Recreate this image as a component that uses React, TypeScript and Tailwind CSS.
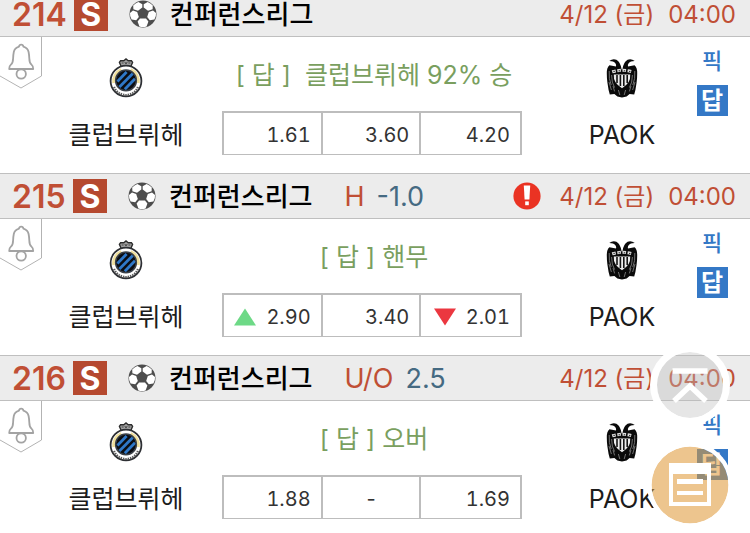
import type { ReactNode } from "react";

type Trend = "up" | "down";

type Odd = {
  value: string;
  trend?: Trend;
};

type Match = {
  no: number;
  market?: string;
  line?: string;
  alert?: boolean;
  answer: string;
  odds: Odd[];
};

const MATCHES: Match[] = [
  {
    no: 214,
    answer: "[ 답 ]\u00a0 클럽브뤼헤 92% 승",
    odds: [{ value: "1.61" }, { value: "3.60" }, { value: "4.20" }],
  },
  {
    no: 215,
    market: "H",
    line: "-1.0",
    alert: true,
    answer: "[ 답 ] 핸무",
    odds: [
      { value: "2.90", trend: "up" },
      { value: "3.40" },
      { value: "2.01", trend: "down" },
    ],
  },
  {
    no: 216,
    market: "U/O",
    line: "2.5",
    answer: "[ 답 ] 오버",
    odds: [{ value: "1.88" }, { value: "-" }, { value: "1.69" }],
  },
];

function BallIcon() {
  return (
    <svg viewBox="0 0 28 28" className="size-7 shrink-0" aria-hidden="true">
      <circle cx="14" cy="14" r="13.5" fill="#4d4d4d" />
      <g fill="#fff">
        <path d="M9.4 2 13.3 4.2v3.4L9 10.8 4.4 9.2 4.2 5.6Q6.4 3 9.4 2Z" />
        <path d="M18.6 2 14.7 4.2v3.4L19 10.8l4.6-1.6.2-3.6Q21.6 3 18.6 2Z" />
        <path d="M4 10.6 8.2 12l1.6 5-2.6 3.2-4.6-.6Q.6 16.4 1 13Z" />
        <path d="M24 10.6 19.8 12l-1.6 5 2.6 3.2 4.6-.6q2-3.2 1.6-6.6Z" />
        <path d="M11 18.4h6l2.4 3.2-1.8 4.8q-3.6 1.2-7.2 0L8.6 21.6Z" />
      </g>
    </svg>
  );
}

function AlertIcon() {
  return (
    <svg viewBox="0 0 28 28" className="size-7 shrink-0" aria-hidden="true">
      <circle cx="14" cy="14" r="13.6" fill="#ea3323" />
      <path d="M10.8 3.6h6.4l-.8 14h-4.8Z" fill="#fff" />
      <rect x="12.2" y="19.4" width="3.6" height="3.8" fill="#fff" />
    </svg>
  );
}

function BellTag() {
  return (
    <svg viewBox="0 0 42 54" className="h-[54px] w-[42px]" aria-hidden="true">
      <path d="M41.5 0v39L21 51 0 39" fill="#fff" stroke="#b3b3b3" />
      <g fill="none" stroke="#a3a3a3" strokeWidth="1.8" strokeLinejoin="round">
        <path d="M19 9.6q.3-1.9 2.2-1.9t2.2 1.9q4.4 1.2 5.2 5.4.6 3 .7 6.4.1 4.6 2.2 6.2 1.9 1.6 1.7 4.4H9.2q-.2-2.8 1.7-4.4 2.1-1.6 2.2-6.2.1-3.4.7-6.4.8-4.2 5.2-5.4Z" />
        <circle cx="21.2" cy="37" r="4.7" fill="#fff" />
      </g>
    </svg>
  );
}

function BruggeCrest() {
  return (
    <svg viewBox="0 0 34 40" className="h-10 w-[34px]" aria-hidden="true">
      <path
        d="M12.4 9 10.4 4.4 11.6 2.6l3.2.2L17 1l2.2 1.8 3.2-.2 1.2 1.8L21.6 9Z"
        fill="#a3a3a3"
        stroke="#2c2c2c"
        strokeWidth="1.4"
      />
      <path d="M12.6 5h2M19.4 5h2M15.8 4l1.2 2 1.2-2" stroke="#444" fill="none" />
      <circle cx="17" cy="23" r="15.4" fill="#fff" stroke="#2d2f33" strokeWidth="1.8" />
      <path d="M4.8 25A12.6 12.6 0 0 1 12.4 11.6" fill="none" stroke="#efdf9c" strokeWidth="3" />
      <path d="M29.2 25A12.6 12.6 0 0 0 21.6 11.6" fill="none" stroke="#efdf9c" strokeWidth="3" />
      <path
        d="M5 29A13 13 0 0 0 29 29"
        fill="none"
        stroke="#5a5a5a"
        strokeWidth="2.2"
        strokeDasharray="1.5 .9"
      />
      <circle cx="17" cy="22.4" r="10.4" fill="#0b0d12" />
      <g stroke="#2f78c8" strokeWidth="2.8">
        <path d="M8.4 23.4 17.6 14" />
        <path d="M10.4 29 23.8 15.4" />
        <path d="M15.8 31.2 26 20.8" />
      </g>
      <circle cx="17" cy="22.4" r="10.4" fill="none" stroke="#3a4048" strokeWidth="1.4" />
    </svg>
  );
}

function PaokCrest() {
  return (
    <svg viewBox="0 0 32 40" className="h-10 w-8" aria-hidden="true">
      <path
        d="M15.6 11.4Q14.6 4.2 10.4 1.8 7 .2 3.2 3q4.6 0 6 2 1.4 1.8.8 3.6L3.4 7.2Q.6 9.6.8 15.4q0 5 .6 9L2.6 32l1.2 4.4 4.6-.4 3 2.6 4.6 1 4.6-1 3-2.6 4.600.4L29.400 32l1.200-7.600q.6-4 .6-9 .2-5.800-2.600-8.200L22 8.600q-.6-1.800.8-3.600 1.400-2 6-2-3.800-2.800-7.200-1.200-4.200 2.400-5.200 9.600Z"
        fill="#0a0a0a"
      />
      <g fill="none" stroke="#8a8a8a" strokeWidth=".8">
        <path d="M3.2 13q-.6 8 2 14M5.6 17q0 8 3 12.600M3 24l2.400 8M7 28l1.600 5.400" />
        <path d="M28.800 13q.6 8-2 14M26.400 17q0 8-3 12.600M29 24l-2.400 8M25 28l-1.600 5.400" />
        <path d="m12.4 32 1.4 5M19.6 32l-1.4 5" />
      </g>
      <path d="M7.8 16.6h16.4q.8 8.6-8.2 13.6-9-5-8.2-13.6Z" fill="#ececec" />
      <path d="M11 17v8M14.4 17v11M17.8 17v11M21.2 17v8" stroke="#151515" strokeWidth="1.6" />
      <path
        d="M6.2 13.8Q16 10.8 26 13.8"
        fill="none"
        stroke="#dedede"
        strokeWidth="3"
        strokeDasharray="3.6 1.6"
      />
      <path d="M7.4 13.4h1.4M12.6 12.8h1.4M17.8 12.8h1.4M23 13.4h1.4" stroke="#222" />
    </svg>
  );
}

function TrendMark({ trend }: { trend?: Trend }) {
  if (!trend) return null;
  return (
    <svg viewBox="0 0 22 18" className="h-[18px] w-[22px] shrink-0" aria-hidden="true">
      {trend === "up" ? (
        <path d="M11 .5 22 17.5H0Z" fill="#6dd986" />
      ) : (
        <path d="M0 .5h22L11 17.5Z" fill="#eb3740" />
      )}
    </svg>
  );
}

function Team({ crest, name }: { crest: ReactNode; name: string }) {
  return (
    <div className="flex flex-col items-center pt-[21px]">
      {crest}
      <span className="mt-[21px] text-[25px] leading-8 text-[#1c1c1c]">{name}</span>
    </div>
  );
}

function MatchRow({ match }: { match: Match }) {
  return (
    <article className="h-[182px]">
      <header className="flex h-[46px] items-center border-y border-[#bfbfbf] bg-[#ececec] pr-[14px] pl-3">
        <span className="min-w-[54px] pt-0.5 text-[32px] leading-10 font-semibold text-[#c04f35]">
          {match.no}
        </span>
        <span className="ml-[7px] flex size-[34px] items-center justify-center bg-[#b5492f] pt-0.5 text-[32px] font-bold text-white">
          S
        </span>
        <div className="ml-[21px] flex items-center gap-[13px]">
          <BallIcon />
          <h2 className="text-[26px] font-medium text-black">컨퍼런스리그</h2>
        </div>
        {match.market && (
          <p className="ml-8 flex gap-3 pt-0.5 text-[27px]">
            <span className="text-[#c04f35]">{match.market}</span>
            <span className="text-[#456a82]">{match.line}</span>
          </p>
        )}
        <div className="ml-auto flex items-center gap-[18px]">
          {match.alert && <AlertIcon />}
          <time className="flex gap-[14px] pt-0.5 text-2xl text-[#c04f35]">
            <span>4/12 (금)</span>
            <span>04:00</span>
          </time>
        </div>
      </header>

      <div className="grid grid-cols-[42px_minmax(0,12fr)_342px_minmax(0,10fr)_40px] pr-[18px]">
        <button type="button" aria-label="알림" className="h-[54px]">
          <BellTag />
        </button>
        <Team crest={<BruggeCrest />} name="클럽브뤼헤" />
        <div className="pt-5 pr-[30px] pl-3">
          <p className="pl-1 text-center text-[25px] leading-9 whitespace-nowrap text-[#7a9f5f]">
            {match.answer}
          </p>
          <div className="mt-[18px] grid h-11 grid-cols-3 divide-x-2 divide-[#bdbdbd] border-2 border-b border-[#bdbdbd]">
            {match.odds.map((odd, i) => (
              <button
                key={i}
                type="button"
                className={
                  odd.value === "-"
                    ? "flex items-center justify-center pt-0.5 text-xl text-[#333]"
                    : "flex items-center justify-end gap-[10px] pt-0.5 pr-[10px] text-xl text-[#333] tabular-nums"
                }
              >
                <TrendMark trend={odd.trend} />
                {odd.value}
              </button>
            ))}
          </div>
        </div>
        <Team crest={<PaokCrest />} name="PAOK" />
        <div className="flex flex-col items-center gap-2 pt-2">
          <button type="button" className="text-[22px] leading-8 font-medium text-[#3478c6]">
            픽
          </button>
          <button
            type="button"
            className="flex size-[31px] items-center justify-center bg-[#3478c6] text-2xl font-bold text-white"
          >
            답
          </button>
        </div>
      </div>
    </article>
  );
}

export default function App() {
  return (
    <main className="relative h-screen overflow-hidden bg-white font-['Inter','Noto_Sans_CJK_KR',sans-serif]">
      <div className="-mt-[9px]">
        {MATCHES.map((match) => (
          <MatchRow key={match.no} match={match} />
        ))}
      </div>

      {/* Floating buttons */}
      <div className="absolute right-5 bottom-2 flex flex-col items-center gap-5">
        <button type="button" aria-label="맨 위로" className="size-20">
          <svg viewBox="0 0 80 80" className="size-20">
            <circle cx="40" cy="40" r="33" fill="#bdbdbd" fillOpacity=".38" />
            <circle cx="40" cy="40" r="36.5" fill="none" stroke="#fff" strokeWidth="7" />
            <path d="M22.5 26h35M24 56l16-15 16 15" fill="none" stroke="#fff" strokeWidth="5.5" />
          </svg>
        </button>
        <button type="button" aria-label="목록" className="size-20">
          <svg viewBox="0 0 80 80" className="size-20 overflow-visible">
            <circle cx="40" cy="40" r="38.5" fill="#df9938" fillOpacity=".57" />
            <circle cx="40" cy="40" r="40.7" fill="none" stroke="#fff" strokeWidth="4.4" />
            <path d="M21 24h38v35H21Z" fill="none" stroke="#fff" strokeWidth="4" />
            <path d="M19 18h42v11H19ZM27 34h26v5H27ZM27 46h26v4H27Z" fill="#fff" />
          </svg>
        </button>
      </div>
    </main>
  );
}
